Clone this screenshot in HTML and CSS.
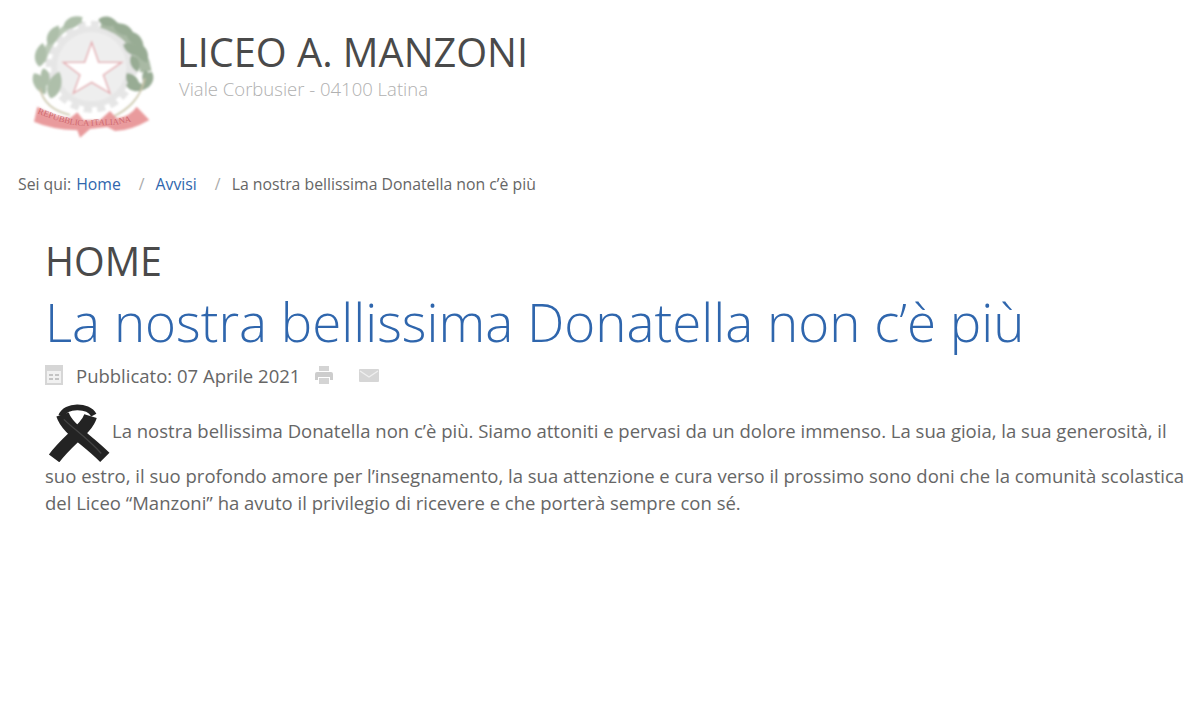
FILE: index.html
```html
<!DOCTYPE html>
<html lang="it">
<head>
    <meta charset="UTF-8">
    <meta name="viewport" content="width=device-width, initial-scale=1.0">
    <title>La nostra bellissima Donatella non c'è più</title>
    <link rel="stylesheet" href="styles.css">
</head>
<body>

<header class="site-header">
    <svg class="emblem" viewBox="0 0 450 420" aria-hidden="true">
        <defs>
            <filter id="soft"><feGaussianBlur stdDeviation="3"/></filter>
            <path id="leaf" d="M0 0 C12 -20 42 -20 60 0 C42 18 12 18 0 0 Z"/>
            <path id="ribbonLine" d="M52 325 Q100 345 150 358 Q190 366 236 360 Q300 365 378 335"/>
        </defs>
        <g filter="url(#soft)">
            <!-- gear -->
            <circle cx="215" cy="185" r="128" fill="none" stroke="#e6e6e6" stroke-width="20" stroke-dasharray="24 16"/>
            <circle cx="215" cy="185" r="122" fill="#e6e6e6"/>
            <circle cx="215" cy="185" r="104" fill="#eeeeee"/>
            <!-- star -->
            <polygon points="215,112 236,172 305,172 250,210 270,265 215,232 160,265 180,210 130,172 194,172" fill="#fff" stroke="#e3a6ab" stroke-width="4"/>
            <!-- left branch -->
            <path d="M185 45 C125 65 85 110 68 170" fill="none" stroke="#bccab8" stroke-width="18"/>
            <g fill="#aebfaa">
                <use href="#leaf" transform="translate(130 68) rotate(-28) scale(1.1)"/>
                <use href="#leaf" transform="translate(85 120) rotate(-62) scale(1.1)"/>
                <use href="#leaf" transform="translate(58 185) rotate(-82) scale(1.2)"/>
                <use href="#leaf" transform="translate(42 205) rotate(62) scale(1.2)"/>
                <use href="#leaf" transform="translate(92 280) rotate(-72) scale(1.4)"/>
                <use href="#leaf" transform="translate(70 190) rotate(78) scale(.9)"/>
            </g>
            <path d="M60 250 C70 300 110 320 150 330" fill="none" stroke="#c9c4a8" stroke-width="5"/>
            <!-- right branch -->
            <path d="M245 52 C310 70 365 120 378 200" fill="none" stroke="#a9b9a4" stroke-width="34"/>
            <g fill="#98ac94">
                <use href="#leaf" transform="translate(235 44) rotate(12) scale(1)"/>
                <use href="#leaf" transform="translate(280 62) rotate(22) scale(1.1)"/>
                <use href="#leaf" transform="translate(320 82) rotate(40) scale(1.1)"/>
                <use href="#leaf" transform="translate(310 118) rotate(30) scale(1.1)"/>
                <use href="#leaf" transform="translate(350 115) rotate(62) scale(1.1)"/>
                <use href="#leaf" transform="translate(335 150) rotate(70) scale(.9)"/>
                <use href="#leaf" transform="translate(375 195) rotate(80) scale(.9)"/>
                <use href="#leaf" transform="translate(320 205) rotate(55) scale(1.1)"/>
                <use href="#leaf" transform="translate(318 240) rotate(10) scale(1)"/>
                <use href="#leaf" transform="translate(395 200) rotate(115) scale(1)"/>
            </g>
            <path d="M375 220 C360 285 320 315 280 335" fill="none" stroke="#c9c4a8" stroke-width="5"/>
            <!-- ribbon -->
            <path d="M52 305 Q105 335 150 340 L172 322 L190 345 L240 345 L270 318 L290 340 Q330 335 350 305 L388 345 Q330 378 285 378 L262 366 L210 372 L180 398 L172 376 Q90 372 42 350 Z" fill="#e99b9d"/>
        </g>
        <text class="emblem-text"><textPath href="#ribbonLine">REPUBBLICA   ITALIANA</textPath></text>
    </svg>
    <div class="site-title">
        <div class="site-name">LICEO A. MANZONI</div>
        <div class="site-address">Viale Corbusier - 04100 Latina</div>
    </div>
</header>

<nav class="breadcrumb">
    <span>Sei qui:</span>
    <a href="#">Home</a>
    <span class="sep">/</span>
    <a href="#">Avvisi</a>
    <span class="sep">/</span>
    <span>La nostra bellissima Donatella non c’è più</span>
</nav>

<main class="content">
    <h2 class="section-title">HOME</h2>
    <h1 class="article-title">La nostra bellissima Donatella non c’è più</h1>

    <div class="article-meta">
        <svg class="icon-calendar" viewBox="0 0 18 20" aria-hidden="true">
            <rect width="18" height="20" fill="#d6d6d6"/>
            <rect x="2" y="6" width="14" height="12" fill="#f1f1f1"/>
            <rect x="4" y="9" width="4" height="2" fill="#c4c4c4"/>
            <rect x="10" y="9" width="4" height="2" fill="#c4c4c4"/>
            <rect x="4" y="13" width="4" height="2" fill="#c4c4c4"/>
            <rect x="10" y="13" width="4" height="2" fill="#c4c4c4"/>
        </svg>
        <span class="meta-date">Pubblicato: 07 Aprile 2021</span>
        <svg class="icon-print" viewBox="0 0 18 20" aria-hidden="true">
            <path d="M4 1h10v5H4z" fill="#d4d4d4"/>
            <path d="M2 7h14a2 2 0 0 1 2 2v6h-3v-3H3v3H0V9a2 2 0 0 1 2-2z" fill="#cdcdcd"/>
            <path d="M4 13h10v6H4z" fill="#d4d4d4"/>
        </svg>
        <svg class="icon-mail" viewBox="0 0 20 13" aria-hidden="true">
            <rect width="20" height="13" rx="1" fill="#d6d6d6"/>
            <path d="M1 2l9 6 9-6" fill="none" stroke="#efefef" stroke-width="1.4"/>
        </svg>
    </div>

    <p class="article-body">
        <svg class="ribbon" viewBox="45 148 200 178" aria-hidden="true">
            <g fill="none" stroke="#232323" stroke-linecap="butt">
                <path d="M92 185 C105 150 175 150 192 182" stroke-width="18"/>
                <path d="M96 180 C110 225 170 255 226 312" stroke-width="40"/>
                <path d="M182 185 C170 225 115 255 70 315" stroke-width="40"/>
            </g>
            <path d="M100 195 C130 225 170 250 215 300" fill="none" stroke="#444" stroke-width="4"/>
        </svg>La nostra bellissima Donatella non c’è più. Siamo attoniti e pervasi da un dolore immenso. La sua gioia, la sua generosità, il suo estro, il suo profondo amore per l’insegnamento, la sua attenzione e cura verso il prossimo sono doni che la comunità scolastica del Liceo “Manzoni” ha avuto il privilegio di ricevere e che porterà sempre con sé.
    </p>
</main>

</body>
</html>
```

FILE: styles.css
```css
body {
    margin: 0;
    background-color: #fff;
    color: #666;
    font-family: "Open Sans", "Liberation Sans", sans-serif;
}
a {
    color: #2f66ad;
    text-decoration: none;
}
.site-header {
    display: flex;
    align-items: flex-start;
    gap: 7px;
    padding: 5px 0 0 20px;
}
.emblem {
    width: 150px;
    height: 140px;
    flex-shrink: 0;
}
.emblem-text {
    font-family: "Liberation Serif", serif;
    font-size: 26px;
    fill: #cf6a70;
}
.site-title {
    padding-top: 22px;
}
.site-name {
    font-size: 39.7px;
    line-height: 50px;
    color: #4a4a4a;
}
.site-address {
    font-size: 18.5px;
    font-weight: 300;
    line-height: 24px;
    padding-left: 2px;
    color: #b0b0b0;
}
.breadcrumb {
    display: flex;
    padding: 29px 0 0 18px;
    font-size: 15.8px;
    line-height: 20px;
    gap: 5px;
}
.breadcrumb .sep {
    margin: 0 6px 0 13px;
    color: #aaa;
}
.content {
    padding: 0 10px 0 45px;
}
.section-title {
    margin: 42px 0 0;
    font-size: 39.4px;
    font-weight: 400;
    line-height: 50px;
    color: #4a4a4a;
}
.article-title {
    margin: 2px 0 0;
    font-size: 52.9px;
    font-weight: 300;
    line-height: 66px;
    color: #2f66ad;
    white-space: nowrap;
}
.article-meta {
    display: flex;
    align-items: center;
    margin-top: 7px;
    height: 28px;
    font-size: 18.5px;
}
.icon-calendar {
    width: 18px;
    height: 20px;
    margin-right: 13px;
}
.icon-print {
    width: 18px;
    height: 20px;
    margin-left: 15px;
}
.icon-mail {
    width: 20px;
    height: 13px;
    margin-left: 26px;
}
.article-body {
    margin: 15px 0 0;
    font-size: 18.53px;
    line-height: 27px;
}
.ribbon {
    width: 65px;
    height: 58px;
    margin: 0 1px;
    vertical-align: middle;
}
```
